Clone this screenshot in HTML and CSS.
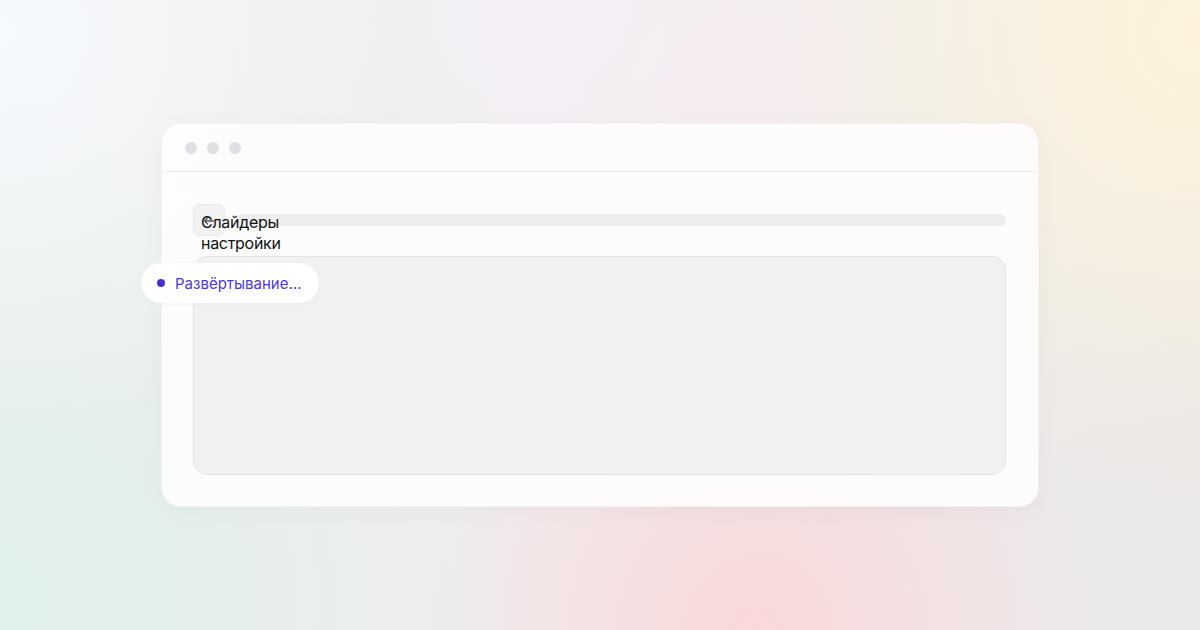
FILE: index.html
```html
<!DOCTYPE html>
<html lang="ru">
<head>
<meta charset="utf-8">
<title>Слайдеры настройки</title>
<link rel="stylesheet" href="styles.css">
</head>
<body>
<div class="stage">
  <div class="window">
    <div class="titlebar">
      <span class="dot"></span><span class="dot"></span><span class="dot"></span>
    </div>
    <div class="content">
      <div class="toprow">
        <div class="back">
          <svg class="arrow" width="16" height="16" viewBox="0 0 16 16"><path d="M12.5 8H3.5M6.5 5L3.5 8l3 3" fill="none" stroke="#555" stroke-width="1.3" stroke-linecap="round" stroke-linejoin="round"/></svg>
          <span class="label">Слайдеры настройки</span>
        </div>
        <div class="bar"></div>
      </div>
      <div class="panel"></div>
    </div>
    <div class="pill"><span class="pdot"></span><span class="ptext">Развёртывание…</span></div>
  </div>
</div>
</body>
</html>
```

FILE: styles.css
```css
html, body {
  margin: 0;
  padding: 0;
  height: 100%;
}
body {
  font-family: Inter, "Noto Sans", "Liberation Sans", sans-serif;
  background-color: #efedee;
  background-image:
    radial-gradient(circle at 0% 5%, rgba(246, 250, 253, 1) 0%, rgba(246, 250, 253, 0) 30%),
    radial-gradient(circle at 100% 5%, rgba(254, 243, 218, 1) 0%, rgba(254, 243, 218, 0) 35%),
    radial-gradient(circle at 45% 0%, rgba(244, 240, 246, 1) 0%, rgba(244, 240, 246, 0) 40%),
    radial-gradient(circle at 0% 95%, rgba(223, 241, 232, 1) 0%, rgba(223, 241, 232, 0) 38%),
    radial-gradient(circle at 63% 100%, rgba(249, 216, 217, 1) 0%, rgba(249, 216, 217, 0) 35%),
    radial-gradient(circle at 58% 12%, rgba(248, 232, 238, 1) 0%, rgba(248, 232, 238, 0) 25%),
    radial-gradient(circle at 100% 70%, rgba(234, 231, 231, 1) 0%, rgba(234, 231, 231, 0) 40%);
}
.stage {
  height: 100%;
  display: flex;
  align-items: center;
  justify-content: center;
}
.window {
  position: relative;
  width: 878px;
  height: 384px;
  box-sizing: border-box;
  background: rgba(253, 253, 253, 0.93);
  border: 1px solid rgba(0, 0, 0, 0.035);
  border-radius: 20px;
  box-shadow: 0 4px 24px rgba(0, 0, 0, 0.03);
  display: flex;
  flex-direction: column;
}
.titlebar {
  height: 48px;
  flex: none;
  box-sizing: border-box;
  border-bottom: 1px solid #ececee;
  display: flex;
  align-items: center;
  gap: 10px;
  padding-left: 23px;
}
.dot {
  width: 12px;
  height: 12px;
  border-radius: 50%;
  background: #e0e0e4;
}
.content {
  padding: 32px 32px 32px 31px;
  display: flex;
  flex-direction: column;
  gap: 20px;
  flex: 1;
}
.toprow {
  display: flex;
  align-items: center;
  gap: 12px;
}
.back {
  position: relative;
  width: 32px;
  height: 32px;
  flex: none;
  box-sizing: border-box;
  padding: 7px 7px;
  border-radius: 7px;
  background: #f2f2f3;
  border: 1px solid #eaeaec;
  font-size: 16px;
  line-height: 21px;
  letter-spacing: -0.3px;
  color: #111;
}
.label {
  position: relative;
  z-index: 1;
}
.arrow {
  position: absolute;
  left: 7px;
  top: 8px;
  z-index: 2;
}
.bar {
  flex: 1;
  height: 12px;
  border-radius: 6px;
  background: #ededee;
}
.panel {
  height: 219px;
  box-sizing: border-box;
  background: #f1f1f2;
  border: 1px solid #e4e4e6;
  border-radius: 14px;
}
.pill {
  position: absolute;
  left: -21px;
  top: 139px;
  height: 40px;
  box-sizing: border-box;
  padding: 0 18px 0 16px;
  display: flex;
  align-items: center;
  gap: 10px;
  background: #ffffff;
  border-radius: 20px;
  box-shadow: 0 1px 4px rgba(0, 0, 0, 0.03);
}
.pdot {
  width: 8px;
  height: 8px;
  border-radius: 50%;
  background: #4433cc;
}
.ptext {
  font-size: 15px;
  color: #4a3ccf;
  white-space: nowrap;
}
```
